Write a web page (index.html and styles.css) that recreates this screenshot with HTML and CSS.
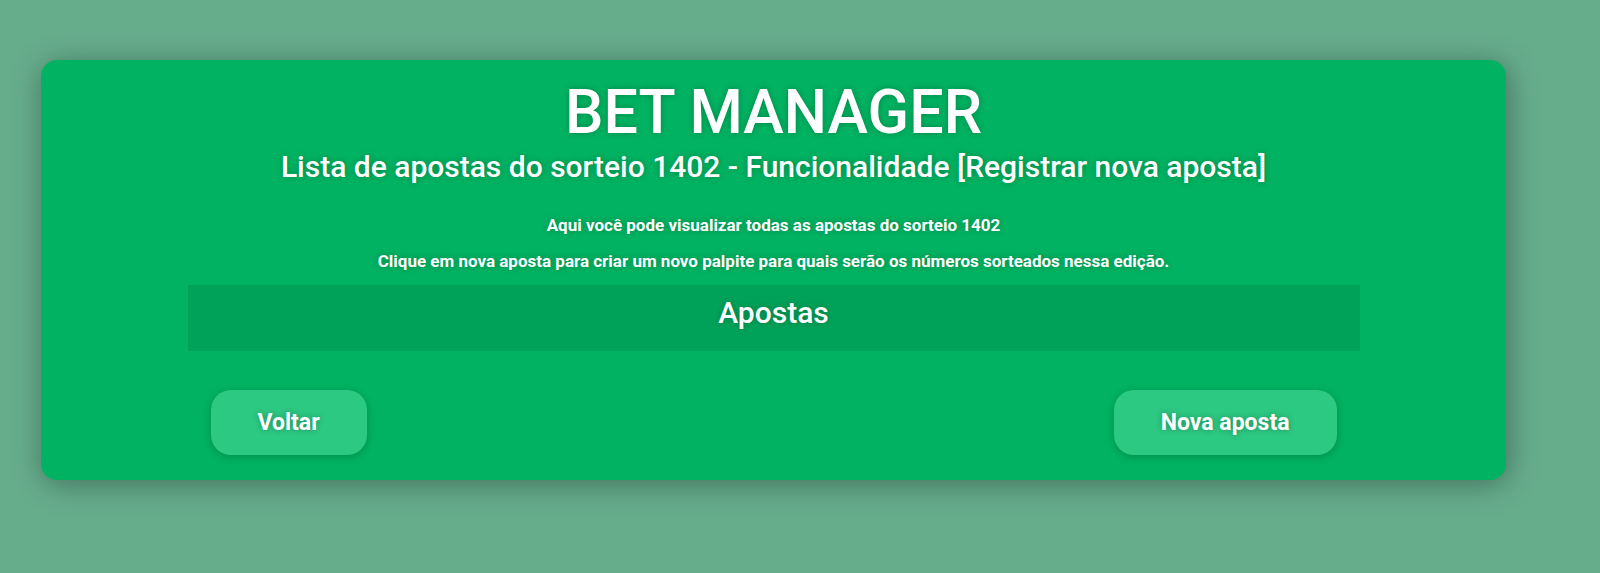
FILE: index.html
```html
<!DOCTYPE html>
<html lang="pt-BR">
<head>
<meta charset="utf-8">
<title>Bet Manager</title>
<link rel="stylesheet" href="styles.css">
</head>
<body>
  <main class="card">
    <h1 class="title">BET MANAGER</h1>
    <h2 class="subtitle">Lista de apostas do sorteio 1402 - Funcionalidade [Registrar nova aposta]</h2>
    <p class="info first">Aqui você pode visualizar todas as apostas do sorteio 1402</p>
    <p class="info">Clique em nova aposta para criar um novo palpite para quais serão os números sorteados nessa edição.</p>
    <section class="bets">
      <h3 class="bets-title">Apostas</h3>
    </section>
    <div class="actions">
      <button class="btn" type="button">Voltar</button>
      <button class="btn" type="button">Nova aposta</button>
    </div>
  </main>
</body>
</html>
```
FILE: styles.css
```css
* { box-sizing: border-box; }

html, body {
  margin: 0;
  height: 100%;
}

body {
  background: #66ad8c;
  font-family: Roboto, "Liberation Sans", sans-serif;
  color: #fff;
  padding: 60px 0 0 41px;
  overflow: hidden;
}

.card {
  width: 1465px;
  height: 420px;
  background: #00b261;
  border-radius: 16px;
  box-shadow: 2px 4px 30px rgba(0, 0, 0, 0.35);
  padding-top: 16px;
  display: flex;
  flex-direction: column;
  align-items: center;
  text-align: center;
  text-shadow: 0 0 6px rgba(0, 0, 0, 0.25);
}

.title {
  margin: 0;
  font-size: 61px;
  line-height: 72px;
  font-weight: 500;
}

.subtitle {
  margin: 2px 0 0;
  font-size: 30px;
  line-height: 34px;
  font-weight: 500;
}

.info {
  margin: 16px 0 0;
  font-size: 17px;
  line-height: 20px;
  font-weight: 700;
}

.info.first {
  margin-top: 31px;
}

.bets {
  width: 80%;
  margin-top: 14px;
  background: #00a259;
  height: 66px;
}

.bets-title {
  margin: 0;
  font-size: 30px;
  line-height: 56px;
  font-weight: 500;
}

.actions {
  width: 80%;
  margin-top: 39px;
  padding: 0 23px;
  display: flex;
  justify-content: space-between;
}

.btn {
  height: 65px;
  padding: 0 47px;
  border: none;
  border-radius: 20px;
  background: #2cc982;
  color: #fff;
  font-family: Roboto, "Liberation Sans", sans-serif;
  font-size: 23px;
  font-weight: 700;
  text-shadow: 0 0 6px rgba(0, 0, 0, 0.3);
  box-shadow: 0 2px 8px rgba(0, 0, 0, 0.2);
  cursor: pointer;
}
```
